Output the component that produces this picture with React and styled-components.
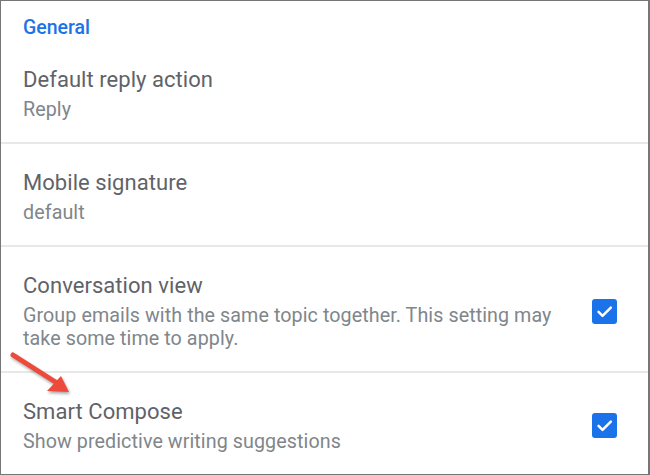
import React from 'react';
import styled, { createGlobalStyle } from 'styled-components';

const GlobalStyle = createGlobalStyle`
  body {
    margin: 0;
    background: #ffffff;
    font-family: Roboto, 'Noto Sans', sans-serif;
  }
`;

const Frame = styled.div`
  position: relative;
  width: 650px;
  height: 475px;
  box-sizing: border-box;
  border: 1px solid #767676;
  border-right-width: 2px;
  background: #ffffff;
  overflow: hidden;
`;

const SectionHeader = styled.div`
  padding: 15px 22px 1px;
  font-size: 19.5px;
  font-weight: 500;
  line-height: 24px;
  color: #1a73e8;
`;

const Row = styled.div`
  display: flex;
  align-items: center;
  gap: 30px;
  padding: 25px 31px 21px 22px;
  border-bottom: ${({ $divider }) => ($divider ? '2px solid #e8e8e8' : 'none')};
`;

const TextCol = styled.div`
  flex: 1;
  min-width: 0;
`;

const Title = styled.div`
  font-size: 22px;
  line-height: 28px;
  letter-spacing: 0.05px;
  color: #5f6368;
`;

const Subtitle = styled.div`
  margin-top: 4px;
  font-size: 19.7px;
  line-height: 23px;
  letter-spacing: 0.08px;
  color: #80868b;
`;

const Checkbox = styled.div`
  flex: none;
  width: 25px;
  height: 25px;
  border-radius: 3px;
  background: #1a73e8;
  display: flex;
  align-items: center;
  justify-content: center;
`;

const Arrow = styled.svg`
  position: absolute;
  left: 0;
  top: 340px;
  filter: drop-shadow(1px 2px 1.5px rgba(0, 0, 0, 0.35));
`;

const settings = [
  { title: 'Default reply action', sub: 'Reply' },
  { title: 'Mobile signature', sub: 'default' },
  {
    title: 'Conversation view',
    sub: 'Group emails with the same topic together. This setting may take some time to apply.',
    checked: true,
  },
  { title: 'Smart Compose', sub: 'Show predictive writing suggestions', checked: true },
];

const Check = () => (
  <Checkbox>
    <svg width="19" height="19" viewBox="0 0 24 24">
      <path d="M4.5 12.5l5 5L20 7" fill="none" stroke="#fff" strokeWidth="3.2" strokeLinecap="round" strokeLinejoin="round" />
    </svg>
  </Checkbox>
);

const App = () => (
  <>
    <GlobalStyle />
    <Frame>
      <SectionHeader>General</SectionHeader>
      {settings.map((s, i) => (
        <Row key={s.title} $divider={i < settings.length - 1}>
          <TextCol>
            <Title>{s.title}</Title>
            <Subtitle>{s.sub}</Subtitle>
          </TextCol>
          {s.checked && <Check />}
        </Row>
      ))}
      <Arrow width="80" height="60" viewBox="0 340 80 60">
        <line x1="12" y1="354" x2="56" y2="382" stroke="#ee4a3b" strokeWidth="5" strokeLinecap="round" />
        <polygon points="68,391 46,390 60,375" fill="#ee4a3b" />
      </Arrow>
    </Frame>
  </>
);

export default App;
